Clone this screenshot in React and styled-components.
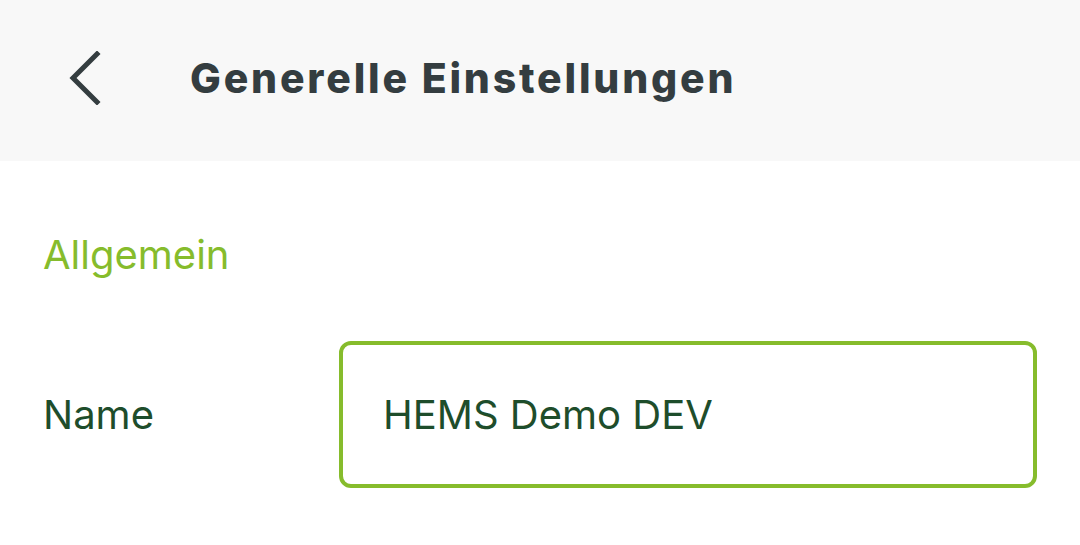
import React, {useState} from 'react';
import styled, {createGlobalStyle} from 'styled-components';

const GlobalStyle = createGlobalStyle`
  html, body {
    margin: 0;
    padding: 0;
    background: #ffffff;
  }
  body {
    font-family: Inter, "Noto Sans", sans-serif;
  }
`;

const Page = styled.div`
  width: 1080px;
  height: 545px;
  background: #ffffff;
  overflow: hidden;
`;

const Header = styled.header`
  height: 161px;
  background: #f8f8f8;
  display: flex;
  align-items: center;
  padding-left: 64px;
  box-sizing: border-box;
  gap: 86px;
  padding-bottom: 6px;
`;

const BackButton = styled.button`
  border: 0;
  background: transparent;
  padding: 0;
  width: 40px;
  height: 54px;
  display: flex;
  align-items: center;
  justify-content: center;
  cursor: pointer;
`;

const Title = styled.h1`
  margin: 0;
  font-family: Inter, "Noto Sans", sans-serif;
  font-weight: 800;
  font-size: 41px;
  letter-spacing: 2.8px;
  color: #343d40;
`;

const Content = styled.main`
  padding: 68px 43px 0 43px;
`;

const SectionTitle = styled.h2`
  margin: 0;
  font-weight: 400;
  font-size: 40px;
  color: #86bc2c;
  line-height: 52px;
`;

const FieldRow = styled.div`
  display: grid;
  grid-template-columns: 296px 1fr;
  align-items: center;
  margin-top: 60px;
`;

const Label = styled.label`
  font-size: 40px;
  color: #1e4d2b;
`;

const Input = styled.input`
  width: 100%;
  height: 147px;
  box-sizing: border-box;
  border: 4px solid #86bc2c;
  border-radius: 12px;
  padding: 0 40px;
  font-family: Inter, "Noto Sans", sans-serif;
  font-size: 40px;
  color: #1e4d2b;
  background: #ffffff;
  outline: none;
`;

const App = () => {
    const [name, setName] = useState('HEMS Demo DEV')

    return (
        <Page>
            <GlobalStyle/>
            <Header>
                <BackButton aria-label="Zurück">
                    <svg width="34" height="54" viewBox="0 0 34 54" fill="none">
                        <path d="M30 3 L6 27 L30 51" stroke="#343d40" strokeWidth="5" strokeLinecap="square"/>
                    </svg>
                </BackButton>
                <Title>Generelle Einstellungen</Title>
            </Header>
            <Content>
                <SectionTitle>Allgemein</SectionTitle>
                <FieldRow>
                    <Label htmlFor="name">Name</Label>
                    <Input id="name" value={name} onChange={e => setName(e.target.value)}/>
                </FieldRow>
            </Content>
        </Page>
    );
};

export default App;
